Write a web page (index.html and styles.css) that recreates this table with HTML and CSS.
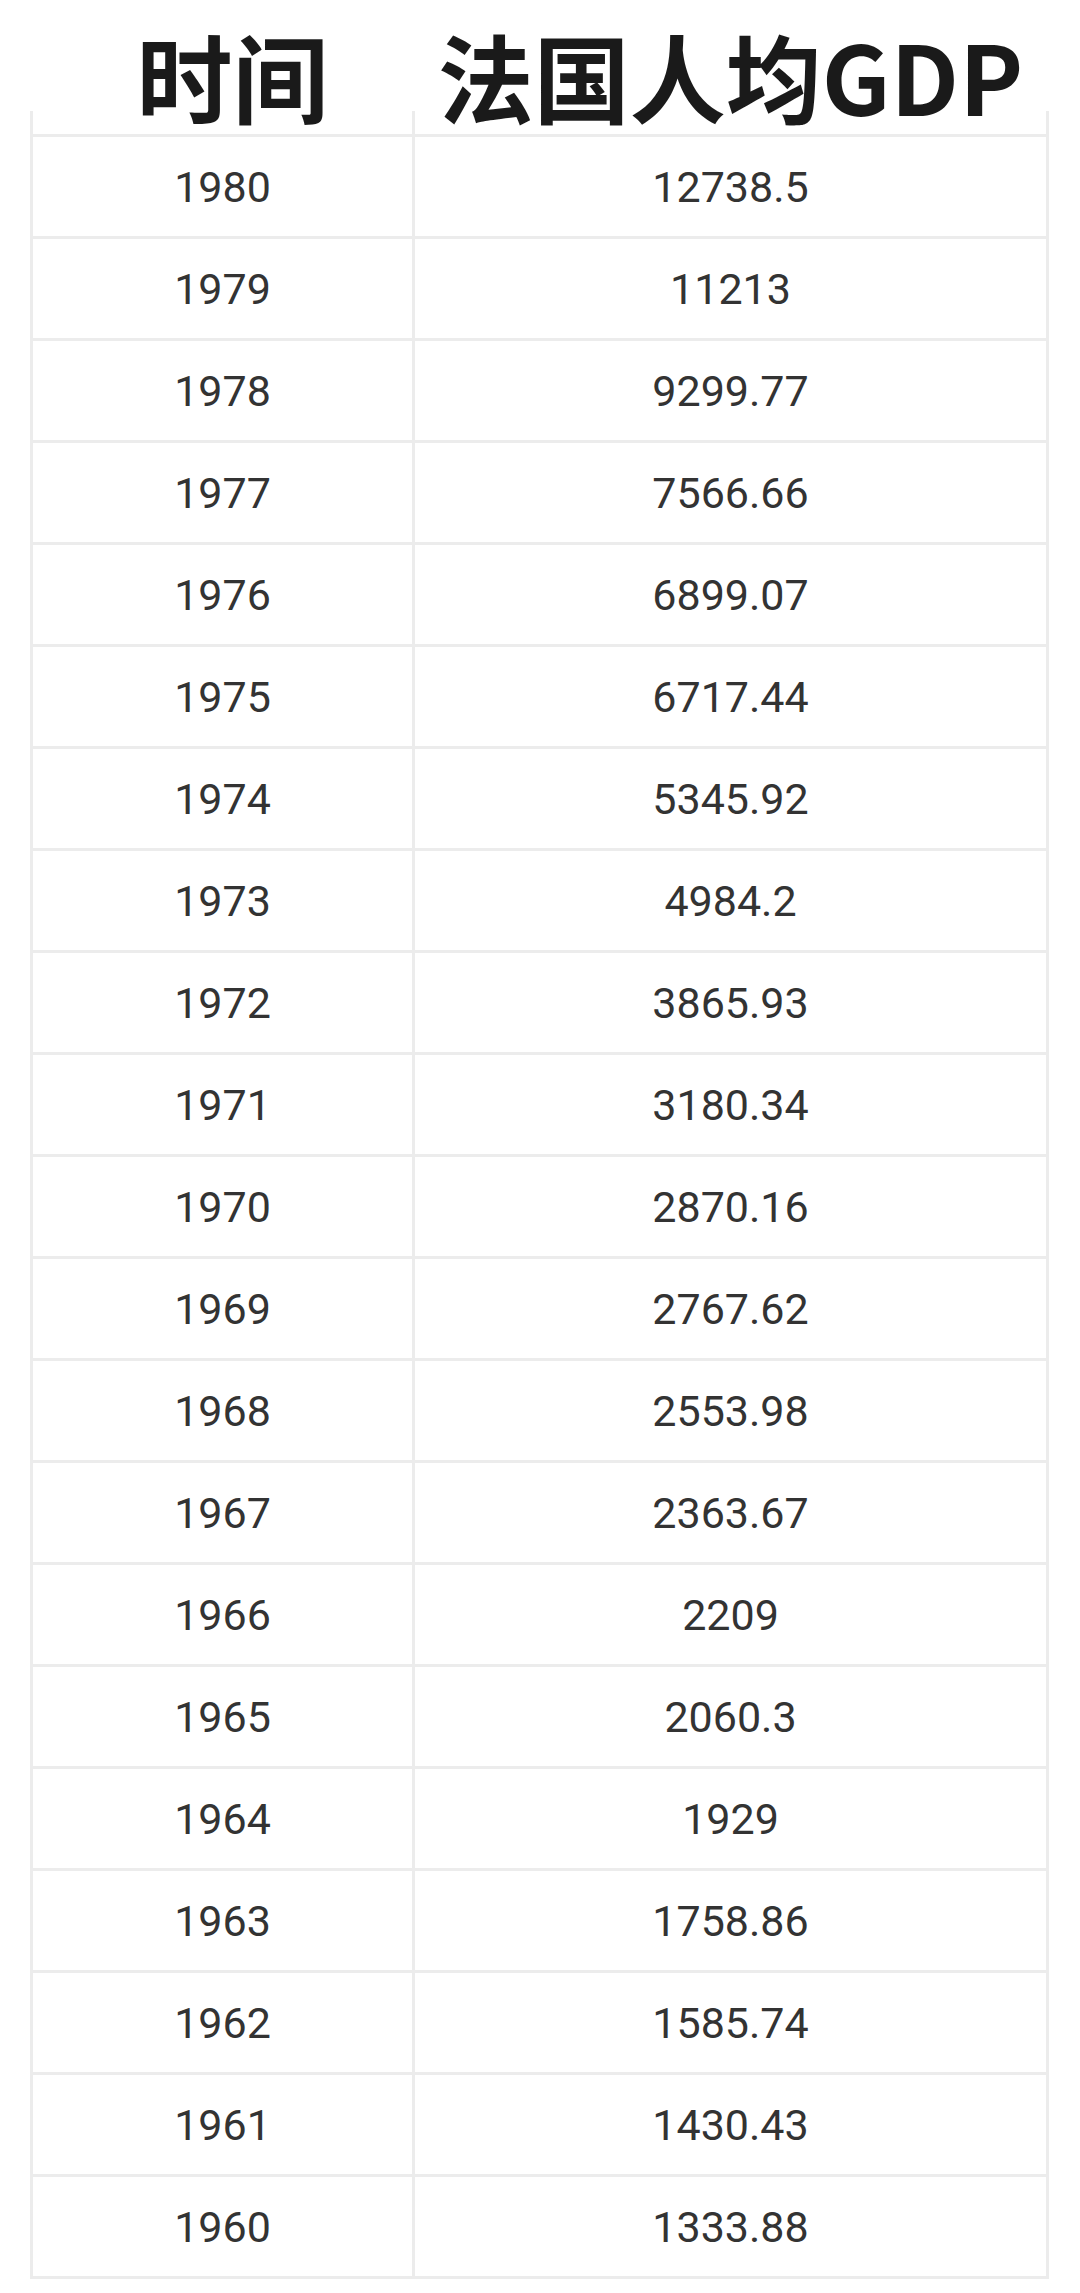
FILE: index.html
```html
<!DOCTYPE html>
<html lang="zh">
<head>
<meta charset="utf-8">
<title>法国人均GDP</title>
<link rel="stylesheet" href="styles.css">
</head>
<body>
<div class="table">
  <div class="row head">
    <div class="cell c1"><span class="label">时间</span></div>
    <div class="cell c2"><span class="label">法国人均GDP</span></div>
  </div>
  <div class="row"><div class="cell c1">1980</div><div class="cell c2">12738.5</div></div>
  <div class="row"><div class="cell c1">1979</div><div class="cell c2">11213</div></div>
  <div class="row"><div class="cell c1">1978</div><div class="cell c2">9299.77</div></div>
  <div class="row"><div class="cell c1">1977</div><div class="cell c2">7566.66</div></div>
  <div class="row"><div class="cell c1">1976</div><div class="cell c2">6899.07</div></div>
  <div class="row"><div class="cell c1">1975</div><div class="cell c2">6717.44</div></div>
  <div class="row"><div class="cell c1">1974</div><div class="cell c2">5345.92</div></div>
  <div class="row"><div class="cell c1">1973</div><div class="cell c2">4984.2</div></div>
  <div class="row"><div class="cell c1">1972</div><div class="cell c2">3865.93</div></div>
  <div class="row"><div class="cell c1">1971</div><div class="cell c2">3180.34</div></div>
  <div class="row"><div class="cell c1">1970</div><div class="cell c2">2870.16</div></div>
  <div class="row"><div class="cell c1">1969</div><div class="cell c2">2767.62</div></div>
  <div class="row"><div class="cell c1">1968</div><div class="cell c2">2553.98</div></div>
  <div class="row"><div class="cell c1">1967</div><div class="cell c2">2363.67</div></div>
  <div class="row"><div class="cell c1">1966</div><div class="cell c2">2209</div></div>
  <div class="row"><div class="cell c1">1965</div><div class="cell c2">2060.3</div></div>
  <div class="row"><div class="cell c1">1964</div><div class="cell c2">1929</div></div>
  <div class="row"><div class="cell c1">1963</div><div class="cell c2">1758.86</div></div>
  <div class="row"><div class="cell c1">1962</div><div class="cell c2">1585.74</div></div>
  <div class="row"><div class="cell c1">1961</div><div class="cell c2">1430.43</div></div>
  <div class="row"><div class="cell c1">1960</div><div class="cell c2">1333.88</div></div>
</div>
</body>
</html>
```
FILE: styles.css
```css
html, body {
  margin: 0;
  padding: 0;
  background: #ffffff;
}

.table {
  margin: 111px 0 0 30px;
  width: 1019px;
  box-sizing: border-box;
  border-left: 3px solid #ececec;
  border-right: 3px solid #ececec;
  font-family: Roboto, "Noto Sans", sans-serif;
}

.row {
  display: grid;
  grid-template-columns: 382px 1fr;
  grid-template-rows: minmax(0, 1fr);
  height: 102px;
  box-sizing: border-box;
  border-bottom: 3px solid #ececec;
}

.cell {
  display: flex;
  align-items: center;
  justify-content: center;
  min-height: 0;
  font-size: 43px;
  color: #333333;
}

.c1 {
  border-right: 3px solid #ececec;
}

.head {
  height: 26px;
}

.head .cell {
  align-items: flex-end;
  padding-bottom: 11px;
  box-sizing: border-box;
}

.head .c1 {
  padding-left: 20px;
}

.label {
  font-family: "Noto Sans CJK SC", sans-serif;
  font-weight: 700;
  font-size: 96px;
  line-height: 1;
  color: #1a1a1a;
  white-space: nowrap;
  flex-shrink: 0;
}
```
